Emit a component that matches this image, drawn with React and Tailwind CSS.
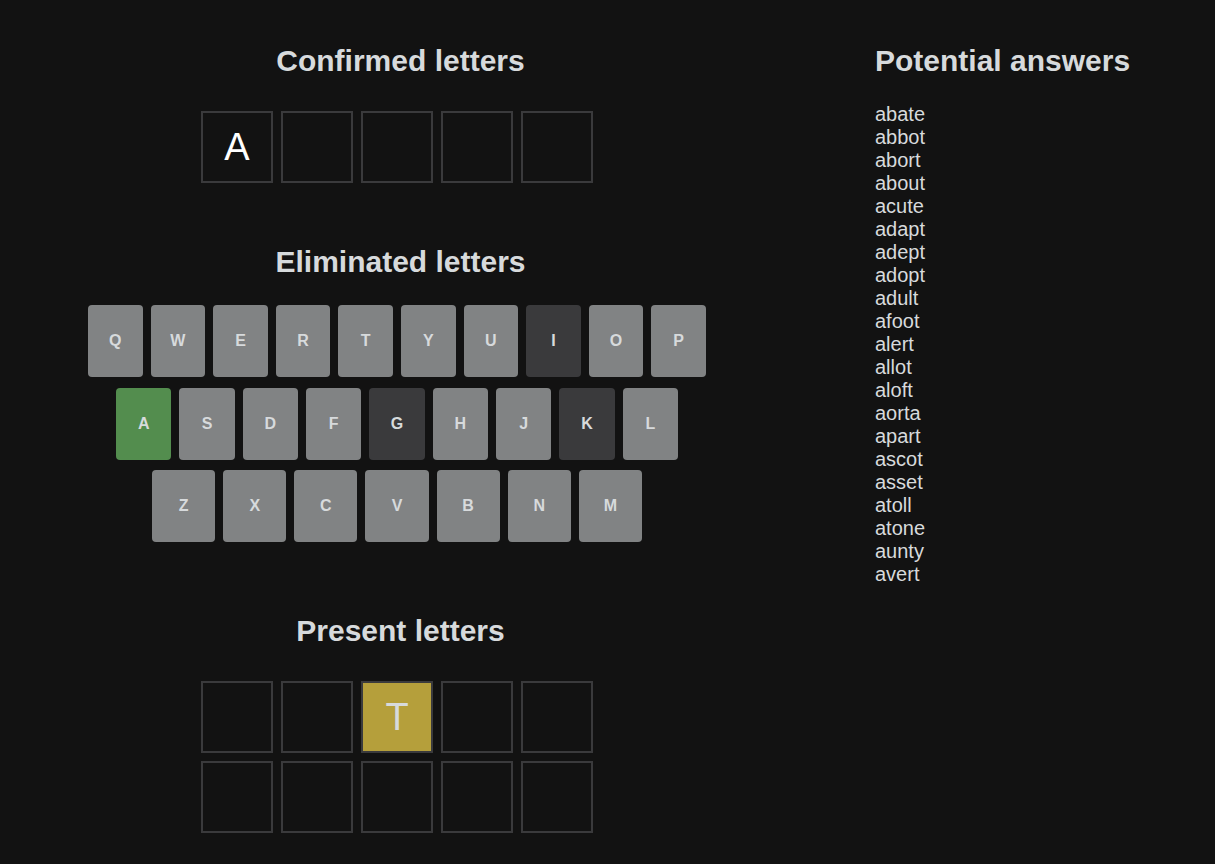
import React from 'react';

const ROWS = [
  { keys: 'QWERTYUIOP', width: 'w-[618px]' },
  { keys: 'ASDFGHJKL', width: 'w-[562px]' },
  { keys: 'ZXCVBNM', width: 'w-[490px]' },
];

const ABSENT = ['I', 'G', 'K'];
const CORRECT = ['A'];

const ANSWERS = [
  'abate', 'abbot', 'abort', 'about', 'acute', 'adapt', 'adept', 'adopt', 'adult', 'afoot',
  'alert', 'allot', 'aloft', 'aorta', 'apart', 'ascot', 'asset', 'atoll', 'atone', 'aunty', 'avert',
];

const Heading = ({ children, className = '' }) => (
  <h2 className={`text-[30px] font-bold leading-[34.5px] text-[#d7dadc] ${className}`}>{children}</h2>
);

const Tile = ({ letter, present, confirmed }) => (
  <div
    className={`
      w-[72px] h-[72px] border-2 border-[#3a3a3c]
      flex items-center justify-center
      text-[38px] leading-none
      ${present ? 'bg-[#b59f3b] text-[#d7dadc]' : ''}
      ${confirmed ? 'text-white' : ''}
    `}
  >
    {letter}
  </div>
);

const TileRow = ({ letters = [], present }) => (
  <div className="flex gap-2">
    {[0, 1, 2, 3, 4].map((i) => (
      <Tile key={i} letter={letters[i]} present={present && !!letters[i]} confirmed={!present && !!letters[i]} />
    ))}
  </div>
);

const Key = ({ k }) => {
  let bg = 'bg-[#818384]';
  if (ABSENT.includes(k)) bg = 'bg-[#3a3a3c]';
  if (CORRECT.includes(k)) bg = 'bg-[#538d4e]';
  return (
    <div
      className={`
        flex-1 h-[72px] rounded-[4px] ${bg}
        flex items-center justify-center
        text-[16px] font-bold text-[#d7dadc]
      `}
    >
      {k}
    </div>
  );
};

export default function App() {
  return (
    <div className="min-h-[864px] bg-[#121212] text-[#d7dadc] font-['Liberation_Sans',Arial,sans-serif] flex">
      <div className="w-[794px] flex flex-col items-center pt-[44px]">
        <Heading className="pl-[7px]">Confirmed letters</Heading>
        <div className="mt-[32.5px]">
          <TileRow letters={['A']} />
        </div>

        <Heading className="mt-[62px] pl-[7px]">Eliminated letters</Heading>
        <div className="mt-[25.5px] flex flex-col items-center gap-[10.5px]">
          {ROWS.map((row) => (
            <div key={row.keys} className={`flex gap-2 ${row.width}`}>
              {row.keys.split('').map((k) => (
                <Key key={k} k={k} />
              ))}
            </div>
          ))}
        </div>

        <Heading className="mt-[72px] pl-[7px]">Present letters</Heading>
        <div className="mt-[32.5px] flex flex-col gap-2">
          <TileRow letters={[null, null, 'T']} present />
          <TileRow present />
        </div>
      </div>

      <div className="pl-[81px] pt-[44px]">
        <Heading>Potential answers</Heading>
        <ul className="mt-[24.5px] text-[20px] leading-[23px] text-[#d7dadc]">
          {ANSWERS.map((w) => (
            <li key={w}>{w}</li>
          ))}
        </ul>
      </div>
    </div>
  );
}
